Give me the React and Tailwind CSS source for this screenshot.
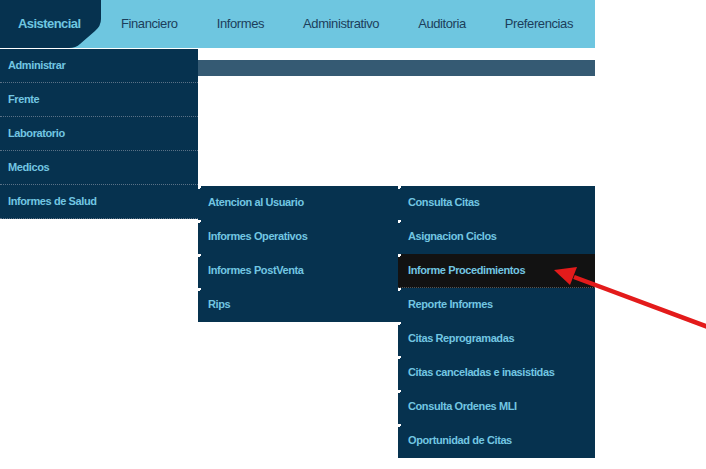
import React from "react";

const lvl1 = ["Administrar", "Frente", "Laboratorio", "Medicos", "Informes de Salud"];
const lvl2 = ["Atencion al Usuario", "Informes Operativos", "Informes PostVenta", "Rips"];
const lvl3 = [
  "Consulta Citas",
  "Asignacion Ciclos",
  "Informe Procedimientos",
  "Reporte Informes",
  "Citas Reprogramadas",
  "Citas canceladas e inasistidas",
  "Consulta Ordenes MLI",
  "Oportunidad de Citas",
];

function Corner() {
  return <span className="absolute left-0 top-0 h-[3px] w-[3px] border-l-2 border-t-2 border-white" />;
}

export default function App() {
  return (
    <div className="relative h-[469px] w-[706px] overflow-hidden bg-white font-['Liberation_Sans',Arial,sans-serif]">
      <nav className="flex h-[48px] w-[595px] items-center bg-[#6ec6e0] text-[13px] tracking-[-0.4px] text-[#1c3e5b]">
        <div className="relative flex h-full w-[101px] shrink-0 items-center pl-[18px]">
          <svg className="absolute inset-0" width="101" height="48" viewBox="0 0 101 48">
            <path d="M0 0 H101 V19 Q101 26 95 31 L80 44 Q76 48 69 48 H0 Z" fill="#06324f" />
          </svg>
          <span className="relative font-bold tracking-[-0.55px] text-[#6ec6e0]">Asistencial</span>
        </div>
        <span className="shrink-0 pl-5 pr-[19.5px]">Financiero</span>
        <span className="shrink-0 px-[19.5px]">Informes</span>
        <span className="shrink-0 px-[19.5px]">Administrativo</span>
        <span className="shrink-0 px-[19.5px]">Auditoria</span>
        <span className="shrink-0 px-[19.5px]">Preferencias</span>
      </nav>
      <div className="mt-[12px] h-[16px] w-[595px] bg-[#355a73]" />

      <ul className="absolute left-0 top-[49px] w-[198px] bg-[#06324f] text-[11px] font-bold tracking-[-0.4px] text-[#72c6e2]">
        {lvl1.map((t) => (
          <li key={t} className="relative flex h-[34px] items-center border-b border-dotted border-[#5a7186] pl-[8px]">
            {t}
          </li>
        ))}
      </ul>

      <ul className="absolute left-[198px] top-[186px] w-[200px] bg-[#06324f] text-[11px] font-bold tracking-[-0.4px] text-[#72c6e2]">
        {lvl2.map((t) => (
          <li key={t} className="relative flex h-[34px] items-center pb-[1px] pl-[10px]">
            <Corner />
            {t}
          </li>
        ))}
      </ul>

      <ul className="absolute left-[398px] top-[186px] w-[197px] bg-[#06324f] text-[11px] font-bold tracking-[-0.4px] text-[#72c6e2]">
        {lvl3.map((t, i) => (
          <li
            key={t}
            className={
              i === 2
                ? "relative flex h-[34px] items-center border-b border-dotted border-[#555] bg-[#121212] pl-[10px]"
                : "relative flex h-[34px] items-center pb-[1px] pl-[10px]"
            }
          >
            <Corner />
            {t}
          </li>
        ))}
      </ul>

      <svg className="pointer-events-none absolute left-0 top-0" width="706" height="469" viewBox="0 0 706 469">
        <line x1="574" y1="277" x2="708" y2="327" stroke="#e31b1b" strokeWidth="4.5" />
        <polygon points="554,270 577,267 570,285" fill="#e31b1b" />
      </svg>
    </div>
  );
}
